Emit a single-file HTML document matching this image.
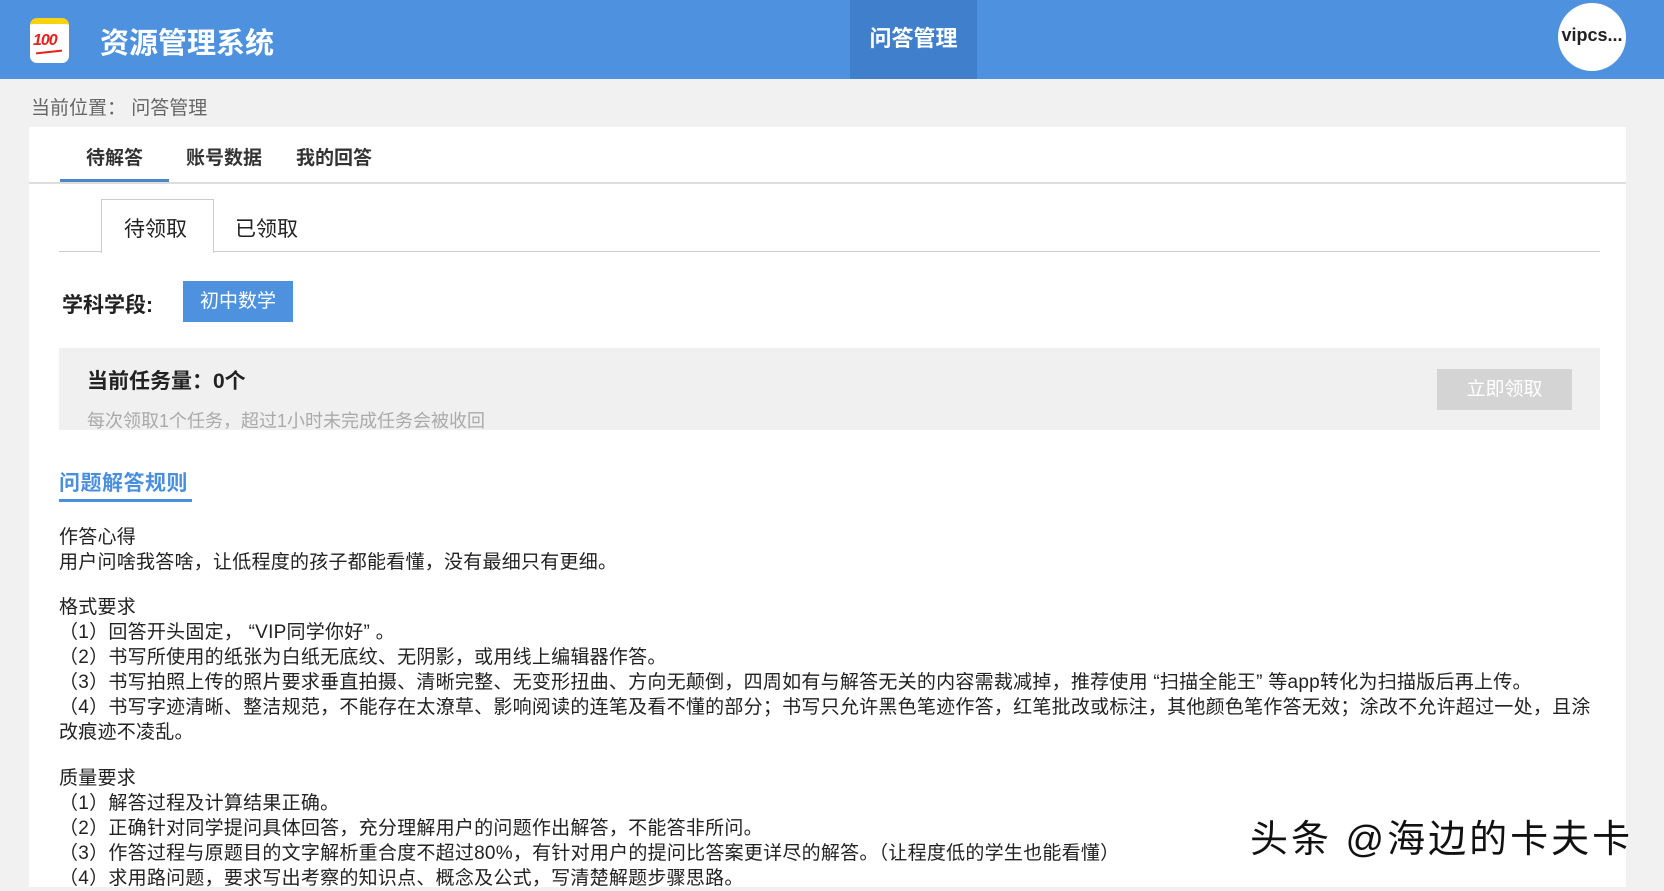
<!DOCTYPE html>
<html><head><meta charset="utf-8"><style>
*{margin:0;padding:0;box-sizing:border-box}
body{width:1664px;height:879px;overflow:hidden;background:#f1f1f1;font-family:"Liberation Sans","Noto Sans CJK SC",sans-serif;color:#222;position:relative}
.a{position:absolute;white-space:nowrap}
.hdr{left:0;top:0;width:1664px;height:79px;background:#4e92df}
.panel{left:29px;top:127px;width:1597px;height:760px;background:#fff}
.t{font-size:19px;letter-spacing:0.25px;line-height:25px;color:#222}
</style></head><body>
<div class="a hdr"></div>
<div class="a" style="left:30px;top:18px;width:39px;height:45px;border-radius:7px;background:#fff;border-top:6px solid #f6d20f;overflow:hidden">
<div class="a" style="left:3px;top:8px;font:italic bold 16px 'Liberation Sans';color:#e2231a;letter-spacing:-1px">100</div>
<div class="a" style="left:6px;top:27px;width:26px;height:2px;background:#e2231a;transform:rotate(-6deg)"></div></div>
<div class="a" style="left:100px;top:20px;font-size:29px;font-weight:bold;color:#fff">资源管理系统</div>
<div class="a" style="left:850px;top:0;width:127px;height:79px;background:#3f7fcc"></div>
<div class="a" style="left:850px;top:21px;width:127px;text-align:center;font-size:22px;font-weight:bold;color:#fff">问答管理</div>
<div class="a" style="left:1558px;top:3px;width:68px;height:68px;border-radius:50%;background:#fff"></div>
<div class="a" style="left:1558px;top:25px;width:68px;text-align:center;font-size:18px;font-weight:bold;color:#222">vipcs...</div>
<div class="a" style="left:31px;top:93px;font-size:19px;color:#666">当前位置： 问答管理</div>
<div class="a panel"></div>
<div class="a" style="left:29px;top:182px;width:1597px;height:2px;background:#ddd"></div>
<div class="a" style="left:60px;top:179px;width:109px;height:3px;background:#4a86cc"></div>
<div class="a" style="left:86px;top:143px;font-size:19px;font-weight:bold;color:#333">待解答</div>
<div class="a" style="left:186px;top:143px;font-size:19px;font-weight:bold;color:#333">账号数据</div>
<div class="a" style="left:296px;top:143px;font-size:19px;font-weight:bold;color:#333">我的回答</div>
<div class="a" style="left:59px;top:251px;width:1541px;height:1px;background:#ccc"></div>
<div class="a" style="left:101px;top:199px;width:113px;height:54px;background:#fff;border:1px solid #ccc;border-bottom:none"></div>
<div class="a" style="left:124px;top:213px;font-size:21px;color:#222">待领取</div>
<div class="a" style="left:235px;top:213px;font-size:21px;color:#222">已领取</div>
<div class="a" style="left:62px;top:289px;font-size:21px;font-weight:bold;color:#222">学科学段:</div>
<div class="a" style="left:183px;top:281px;width:110px;height:41px;background:#4e92df;color:#fff;font-size:19px;text-align:center;line-height:41px">初中数学</div>
<div class="a" style="left:59px;top:348px;width:1541px;height:82px;background:#f0f0f0"></div>
<div class="a" style="left:87px;top:365px;font-size:21px;font-weight:bold;color:#222">当前任务量：0个</div>
<div class="a" style="left:87px;top:407px;font-size:18px;color:#aaa">每次领取1个任务，超过1小时未完成任务会被收回</div>
<div class="a" style="left:1437px;top:369px;width:135px;height:41px;background:#d4d4d4;color:#fff;font-size:19px;text-align:center;line-height:41px">立即领取</div>
<div class="a" style="left:59px;top:467px;font-size:21px;font-weight:bold;color:#4a8fdf;letter-spacing:0.5px">问题解答规则</div>
<div class="a" style="left:59px;top:499px;width:133px;height:3px;background:#4a8fdf"></div>
<div class="a t" style="left:59px;top:525px">作答心得<br>用户问啥我答啥，让低程度的孩子都能看懂，没有最细只有更细。</div>
<div class="a t" style="left:59px;top:595px">格式要求<br>（1）回答开头固定， “VIP同学你好” 。<br>（2）书写所使用的纸张为白纸无底纹、无阴影，或用线上编辑器作答。<br>（3）书写拍照上传的照片要求垂直拍摄、清晰完整、无变形扭曲、方向无颠倒，四周如有与解答无关的内容需裁减掉，推荐使用 “扫描全能王” 等app转化为扫描版后再上传。<br>（4）书写字迹清晰、整洁规范，不能存在太潦草、影响阅读的连笔及看不懂的部分；书写只允许黑色笔迹作答，红笔批改或标注，其他颜色笔作答无效；涂改不允许超过一处，且涂<br>改痕迹不凌乱。</div>
<div class="a t" style="left:59px;top:766px">质量要求<br>（1）解答过程及计算结果正确。<br>（2）正确针对同学提问具体回答，充分理解用户的问题作出解答，不能答非所问。<br>（3）作答过程与原题目的文字解析重合度不超过80%，有针对用户的提问比答案更详尽的解答。（让程度低的学生也能看懂）<br>（4）求用路问题，要求写出考察的知识点、概念及公式，写清楚解题步骤思路。</div>
<div class="a" style="left:1250px;top:808px;font-size:38px;letter-spacing:3px;color:#111;text-shadow:1px 1px 0 #fff,-1px -1px 0 #fff">头条 @海边的卡夫卡</div>
</body></html>
